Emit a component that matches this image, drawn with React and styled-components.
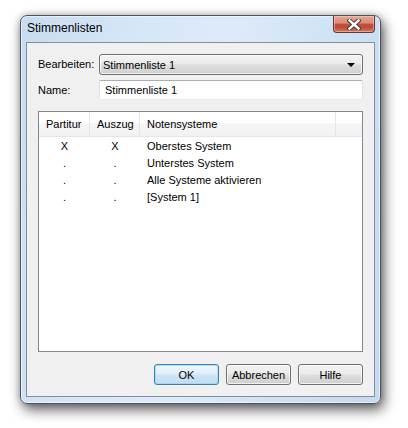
import React from "react";
import styled, { createGlobalStyle, css } from "styled-components";

const Global = createGlobalStyle`
  html, body { margin: 0; padding: 0; background: #ffffff; }
  body { font-family: "Liberation Sans", Arial, sans-serif; }
`;

const Page = styled.div`
  padding: 15px 0 0 20px;
  width: 408px;
  height: 428px;
  box-sizing: border-box;
`;

const Window = styled.div`
  width: 361px;
  height: 389px;
  box-sizing: border-box;
  border: 1px solid #4b5562;
  border-radius: 7px;
  background: linear-gradient(100deg, #c8dcf1 0%, #d6e7f8 30%, #dcebfa 50%, #cfe2f5 75%, #c4daf0 100%);
  box-shadow: 3px 6px 13px rgba(0, 0, 0, 0.6), 0 0 7px rgba(0, 0, 0, 0.25),
    inset 0 0 0 1px rgba(255, 255, 255, 0.55);
  display: flex;
  flex-direction: column;
`;

const TitleBar = styled.div`
  height: 26px;
  display: flex;
  align-items: flex-start;
  padding-left: 6px;
`;

const Title = styled.div`
  font-size: 12px;
  color: #000;
  padding-top: 5px;
  line-height: 14px;
`;

const CloseButton = styled.div`
  margin-left: auto;
  margin-right: 5px;
  width: 42px;
  height: 17px;
  box-sizing: border-box;
  border: 1px solid #6b3530;
  border-top: none;
  border-radius: 0 0 4px 4px;
  background: linear-gradient(#e5a797 0%, #d9897a 45%, #c2503b 50%, #c04a34 70%, #d27a66 100%);
  box-shadow: inset 0 0 0 1px rgba(255, 220, 210, 0.45);
  display: flex;
  align-items: center;
  justify-content: center;
`;

const Client = styled.div`
  margin: 0 5px 6px 5px;
  flex: 1;
  border: 1px solid #848d98;
  background: #f0f0f0;
  padding: 11px 11px 11px 11px;
  display: flex;
  flex-direction: column;
  font-size: 11px;
  color: #000;
`;

const FieldGrid = styled.div`
  display: grid;
  grid-template-columns: 61px 264px;
  grid-template-rows: 21px 20px;
  row-gap: 5px;
  align-items: center;
`;

const Label = styled.div`
  line-height: 13px;
`;

const Combo = styled.div`
  height: 21px;
  box-sizing: border-box;
  border: 1px solid #707070;
  border-radius: 3px;
  background: linear-gradient(#f3f3f3 0%, #ebebeb 45%, #dddddd 55%, #d0d0d0 100%);
  box-shadow: inset 0 0 0 1px rgba(255, 255, 255, 0.7);
  display: flex;
  align-items: center;
  padding: 0 7px 0 3px;
`;

const ComboText = styled.span`
  flex: 1;
`;

const Arrow = styled.span`
  width: 0;
  height: 0;
  border-left: 4px solid transparent;
  border-right: 4px solid transparent;
  border-top: 4px solid #000;
`;

const TextBox = styled.div`
  height: 20px;
  box-sizing: border-box;
  background: #fff;
  border: 1px solid #e2e3ea;
  border-top-color: #abadb3;
  border-bottom-color: #e3e9ef;
  border-radius: 2px;
  display: flex;
  align-items: center;
  padding-left: 5px;
`;

const ListView = styled.div`
  margin-top: 11px;
  flex: 1;
  background: #fff;
  border: 1px solid #828790;
  display: flex;
  flex-direction: column;
`;

const Header = styled.div`
  display: flex;
  height: 24px;
  border-bottom: 1px solid #e5e5e5;
  background: linear-gradient(#ffffff 0%, #ffffff 45%, #f5f6f7 46%, #f1f2f4 100%);
`;

const HeaderCell = styled.div`
  width: ${(p) => p.$w}px;
  flex: ${(p) => (p.$w ? "none" : "1")};
  box-sizing: border-box;
  border-right: ${(p) => (p.$last ? "none" : "1px solid #e3e5e9")};
  display: flex;
  align-items: center;
  padding-left: 7px;
`;

const Row = styled.div`
  display: flex;
  height: 17px;
  align-items: center;
`;

const Cell = styled.div`
  width: ${(p) => p.$w}px;
  box-sizing: border-box;
  ${(p) =>
    p.$center
      ? css`
          text-align: center;
        `
      : css`
          padding-left: 7px;
        `}
`;

const ButtonRow = styled.div`
  margin-top: 12px;
  display: flex;
  justify-content: flex-end;
  gap: 7px;
`;

const Button = styled.div`
  width: 65px;
  height: 21px;
  box-sizing: border-box;
  border: 1px solid ${(p) => (p.$default ? "#3c7fb1" : "#707070")};
  border-radius: 3px;
  background: ${(p) =>
    p.$default
      ? "linear-gradient(#eef6fc 0%, #e2effa 45%, #cde4f5 55%, #c2dcf0 100%)"
      : "linear-gradient(#f2f2f2 0%, #ebebeb 45%, #dddddd 55%, #cfcfcf 100%)"};
  box-shadow: inset 0 0 0 1px
    ${(p) => (p.$default ? "rgba(150, 215, 245, 0.7)" : "rgba(255, 255, 255, 0.7)")};
  display: flex;
  align-items: center;
  justify-content: center;
`;

const rows = [
  ["X", "X", "Oberstes System"],
  [".", ".", "Unterstes System"],
  [".", ".", "Alle Systeme aktivieren"],
  [".", ".", "[System 1]"],
];

export default function App() {
  return (
    <>
      <Global />
      <Page>
        <Window>
          <TitleBar>
            <Title>Stimmenlisten</Title>
            <CloseButton>
              <svg width="14" height="11" viewBox="0 0 14 11">
                <path d="M2.5 1.5 L11.5 9.5 M11.5 1.5 L2.5 9.5" stroke="#4a3a3a" strokeWidth="4.4" strokeLinecap="square" />
                <path d="M2.5 1.5 L11.5 9.5 M11.5 1.5 L2.5 9.5" stroke="#ffffff" strokeWidth="2.4" strokeLinecap="square" />
              </svg>
            </CloseButton>
          </TitleBar>
          <Client>
            <FieldGrid>
              <Label>Bearbeiten:</Label>
              <Combo>
                <ComboText>Stimmenliste 1</ComboText>
                <Arrow />
              </Combo>
              <Label>Name:</Label>
              <TextBox>Stimmenliste 1</TextBox>
            </FieldGrid>
            <ListView>
              <Header>
                <HeaderCell $w={51}>Partitur</HeaderCell>
                <HeaderCell $w={50}>Auszug</HeaderCell>
                <HeaderCell $w={196}>Notensysteme</HeaderCell>
                <HeaderCell $last />
              </Header>
              {rows.map((r, i) => (
                <Row key={i}>
                  <Cell $w={51} $center>{r[0]}</Cell>
                  <Cell $w={50} $center>{r[1]}</Cell>
                  <Cell $w={196}>{r[2]}</Cell>
                </Row>
              ))}
            </ListView>
            <ButtonRow>
              <Button $default>OK</Button>
              <Button>Abbrechen</Button>
              <Button>Hilfe</Button>
            </ButtonRow>
          </Client>
        </Window>
      </Page>
    </>
  );
}
